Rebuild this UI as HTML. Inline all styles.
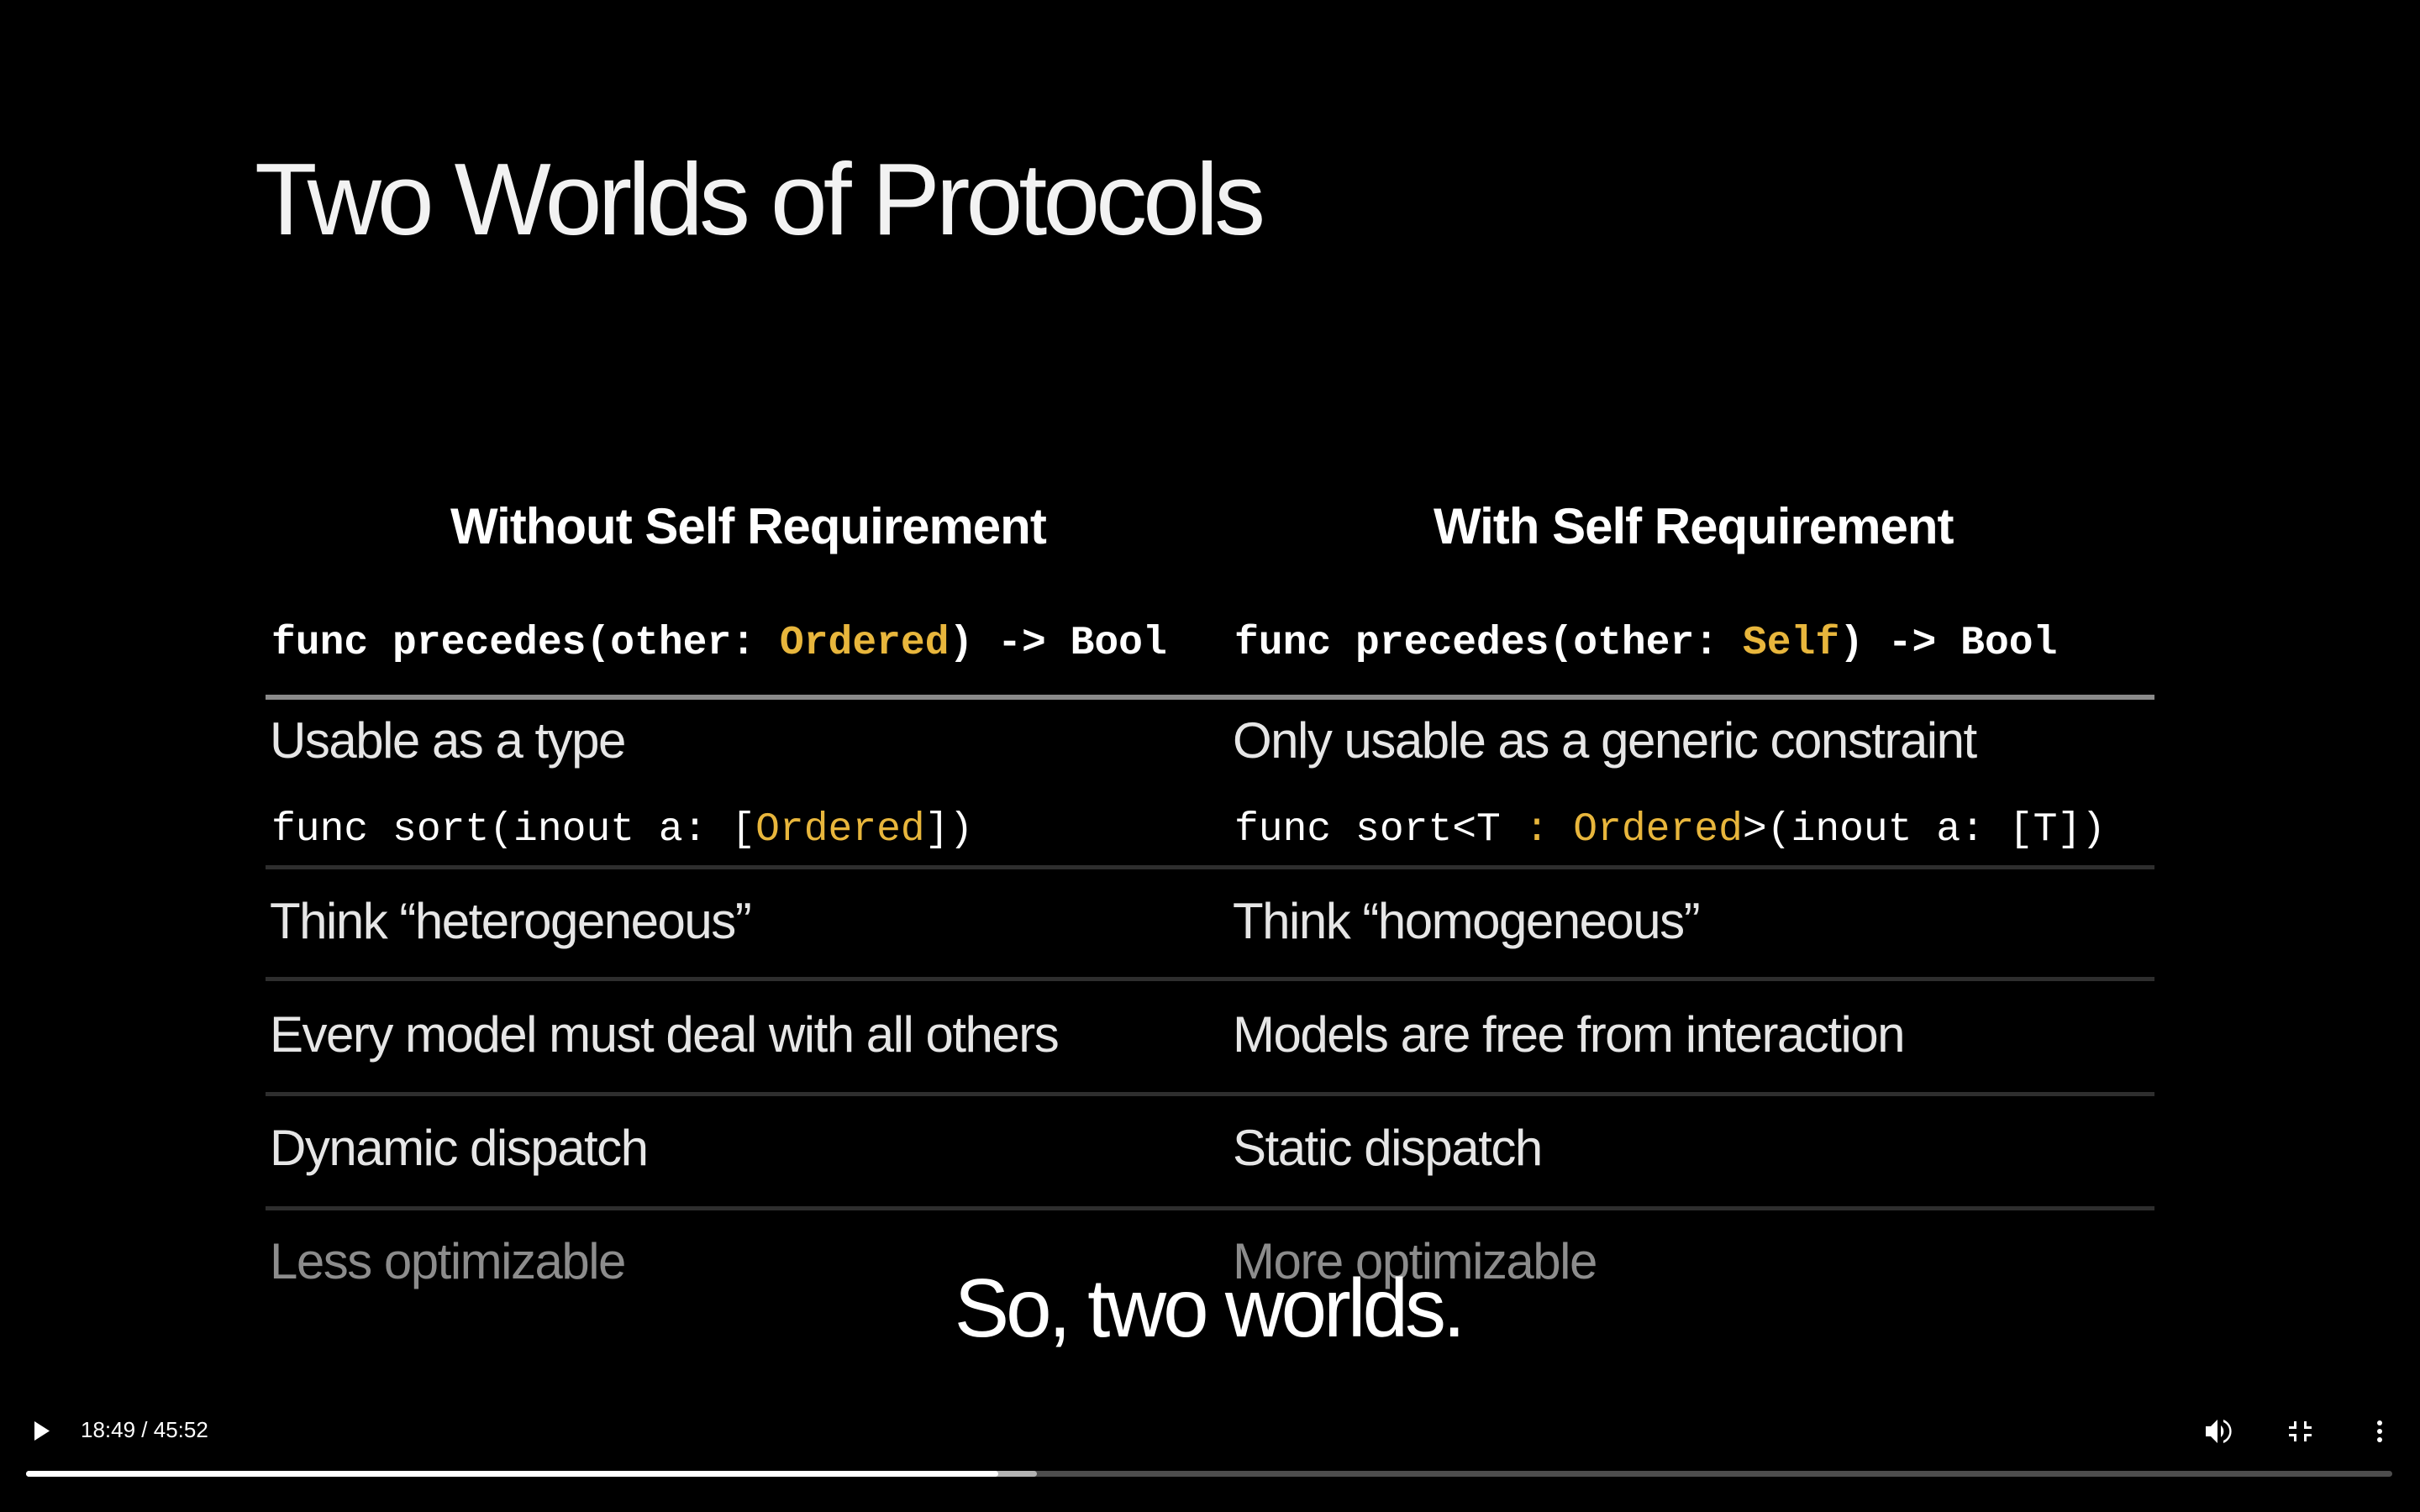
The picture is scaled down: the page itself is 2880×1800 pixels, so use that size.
<!DOCTYPE html>
<html><head><meta charset="utf-8"><style>
html,body{margin:0;padding:0;background:#000;width:2880px;height:1800px;overflow:hidden}
.t{position:absolute;white-space:nowrap;color:#fff;font-family:"Liberation Sans",sans-serif;line-height:1}
.m{font-family:"Liberation Mono","DejaVu Sans Mono",monospace;font-weight:bold;font-size:48px;color:#fff}
.y{color:#e8b63c}
.b{font-size:60px;letter-spacing:-1.5px;color:#e6e6e6}
.ln{position:absolute;left:316px;width:2248px;height:5px;background:#2e2e2e}
</style></head><body>
<div class="t" style="left:303px;top:176px;font-size:122px;letter-spacing:-5px;color:#f2f2f2">Two Worlds of Protocols</div>
<div class="t" style="left:536px;top:597px;font-size:60px;font-weight:bold;letter-spacing:-1px">Without Self Requirement</div>
<div class="t" style="left:1706px;top:597px;font-size:60px;font-weight:bold;letter-spacing:-1px">With Self Requirement</div>
<div class="t m" style="left:323px;top:742px">func precedes(other: <span class="y">Ordered</span>) -&gt; Bool</div>
<div class="t m" style="left:1469px;top:742px">func precedes(other: <span class="y">Self</span>) -&gt; Bool</div>
<div class="ln" style="top:827px;height:6px;background:#8a8a8a"></div>
<div class="t b" style="left:321px;top:852px">Usable as a type</div>
<div class="t b" style="left:1467px;top:852px">Only usable as a generic constraint</div>
<div class="t m" style="left:323px;top:964px;font-weight:normal">func sort(inout a: [<span class="y">Ordered</span>])</div>
<div class="t m" style="left:1469px;top:964px;font-weight:normal">func sort&lt;T <span class="y">: Ordered</span>&gt;(inout a: [T])</div>
<div class="ln" style="top:1030px"></div>
<div class="t b" style="left:321px;top:1067px">Think “heterogeneous”</div>
<div class="t b" style="left:1467px;top:1067px">Think “homogeneous”</div>
<div class="ln" style="top:1163px"></div>
<div class="t b" style="left:321px;top:1202px">Every model must deal with all others</div>
<div class="t b" style="left:1467px;top:1202px">Models are free from interaction</div>
<div class="ln" style="top:1300px"></div>
<div class="t b" style="left:321px;top:1337px">Dynamic dispatch</div>
<div class="t b" style="left:1467px;top:1337px">Static dispatch</div>
<div class="ln" style="top:1436px"></div>
<div class="t b" style="left:321px;top:1472px;color:#8c8c8c">Less optimizable</div>
<div class="t b" style="left:1467px;top:1472px;color:#8c8c8c">More optimizable</div>
<div class="t" style="left:1038px;top:1508px;font-size:98px;letter-spacing:-4px;width:800px;text-align:center">So, two worlds.</div>
<svg style="position:absolute;left:0;top:0" width="2880" height="1800">
<polygon points="41,1692 59,1703.5 41,1715" fill="#fff"/>
<path d="M2625 1698h6l8-8v28l-8-8h-6z" fill="#fff"/>
<path d="M2643 1697a9 9 0 0 1 0 14z" fill="#fff"/>
<path d="M2646 1690a15 15 0 0 1 0 28v-3a12 12 0 0 0 0-22z" fill="#fff"/>
<path d="M2730 1692v6h-6v3h9v-9zM2742 1692v9h9v-3h-6v-6zM2724 1707v3h6v6h3v-9zM2742 1707v9h3v-6h6v-3z" fill="#fff"/>
<circle cx="2832" cy="1694" r="3" fill="#fff"/><circle cx="2832" cy="1704" r="3" fill="#fff"/><circle cx="2832" cy="1714" r="3" fill="#fff"/>
<rect x="31" y="1751" width="2816" height="7" rx="3.5" fill="#4d4d4d"/>
<rect x="31" y="1751" width="1203" height="7" rx="3.5" fill="#b3b3b3"/>
<rect x="31" y="1751" width="1157" height="7" rx="3.5" fill="#fff"/>
</svg>
<div class="t" style="left:96px;top:1689px;font-size:26px">18:49 / 45:52</div>
</body></html>
